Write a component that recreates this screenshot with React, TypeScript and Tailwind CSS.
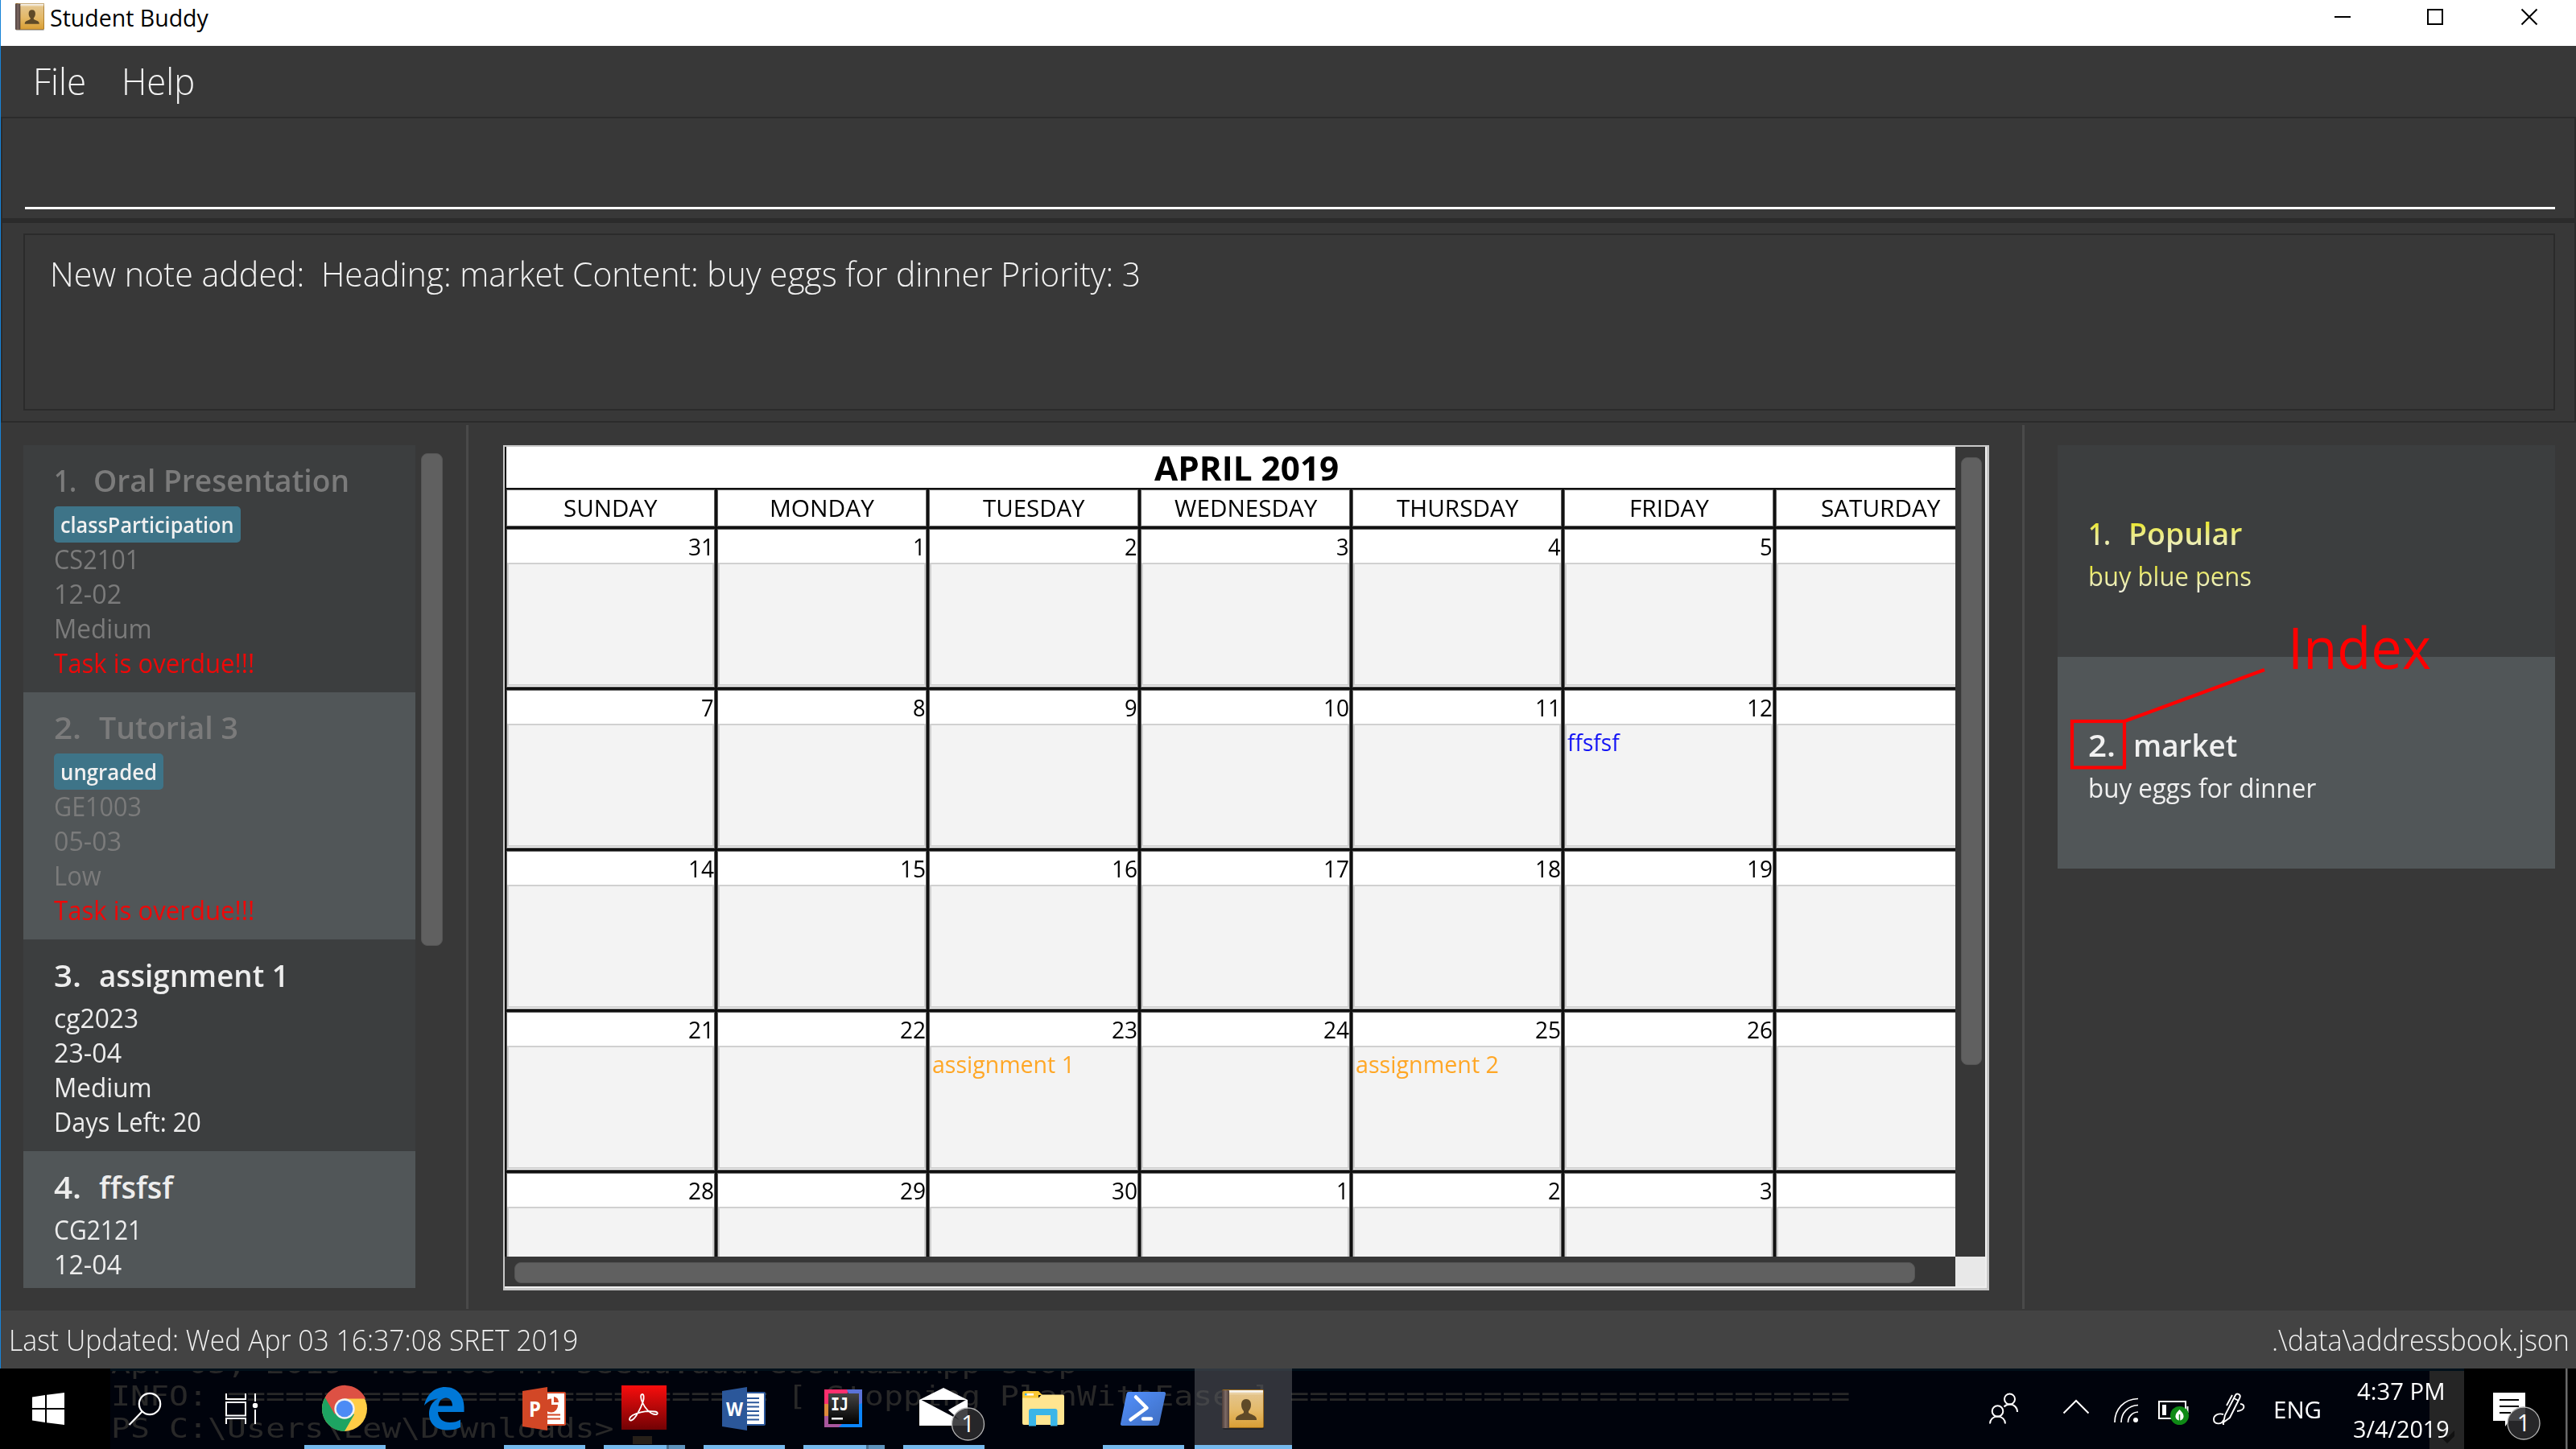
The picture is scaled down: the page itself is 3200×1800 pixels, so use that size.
import React, { useLayoutEffect, useRef, useState } from "react";

/** Single line of text, condensed or widened to occupy exactly `w` pixels. */
function Fit({ w, className = "", children }: { w: number; className?: string; children: string }) {
  const ref = useRef<HTMLSpanElement>(null);
  const [scale, setScale] = useState(1);
  useLayoutEffect(() => {
    if (ref.current) setScale(w / ref.current.offsetWidth);
  }, [w, children]);
  return (
    <span className="block shrink-0" style={{ width: w }}>
      <span
        ref={ref}
        className={`inline-block origin-left whitespace-pre align-top ${className}`}
        style={{ transform: `scaleX(${scale})` }}
      >
        {children}
      </span>
    </span>
  );
}

function BookIcon({ className, id }: { className: string; id: string }) {
  return (
    <svg className={className} viewBox="0 0 52 50" preserveAspectRatio="none">
      <defs>
        <linearGradient id={id} x1="0" y1="0" x2="0" y2="1">
          <stop offset="0" stopColor="#e3c795" />
          <stop offset="0.55" stopColor="#e4b968" />
          <stop offset="1" stopColor="#d99f35" />
        </linearGradient>
        <linearGradient id={`${id}s`} x1="0" y1="0" x2="1" y2="0">
          <stop offset="0" stopColor="#4b3c38" />
          <stop offset="0.5" stopColor="#7d6a65" />
          <stop offset="1" stopColor="#50403a" />
        </linearGradient>
      </defs>
      <rect x="1" y="2" width="51" height="48" rx="2" fill="#000" opacity="0.25" />
      <rect x="0" y="0" width="52" height="48" rx="2" fill="#9a6a1c" />
      <rect x="9" y="1" width="42" height="46" fill={`url(#${id})`} />
      <rect x="5" y="1" width="46" height="3" fill="#f5f1ea" />
      <rect x="9" y="5" width="42" height="1" fill="#f0dcb4" />
      <rect x="0" y="1" width="9" height="47" rx="1" fill={`url(#${id}s)`} />
      <path d="M30 12c-4 0-6 3-6 7s1.500 6 3 8v2c-2 2-10 3-10 8v1h26v-1c0-5-8-6-10-8v-2c1.500-2 3-4 3-8s-2-7-6-7z" fill="#5f4a28" />
    </svg>
  );
}

type Task = { n: string; nw: number; title: string; tw: number; tag?: string; tagW?: number; lines: [string, number][]; done?: boolean };

const tasks: Task[] = [
  { n: "1.", nw: 28, title: "Oral Presentation", tw: 318, tag: "classParticipation", tagW: 216, done: true, lines: [["CS2101", 106], ["12-02", 84], ["Medium", 122], ["Task is overdue!!!", 249]] },
  { n: "2.", nw: 34, title: "Tutorial 3", tw: 173, tag: "ungraded", tagW: 120, done: true, lines: [["GE1003", 109], ["05-03", 84], ["Low", 59], ["Task is overdue!!!", 249]] },
  { n: "3.", nw: 34, title: "assignment 1", tw: 236, lines: [["cg2023", 105], ["23-04", 84], ["Medium", 122], ["Days Left: 20", 183]] },
  { n: "4.", nw: 34, title: "ffsfsf", tw: 92, lines: [["CG2121", 109], ["12-04", 84], ["Low", 59], ["Days Left: 9", 168]] },
];

function TaskCard({ t, odd }: { t: Task; odd: boolean }) {
  return (
    <div className={`shrink-0 pl-[38px] ${t.tag ? "h-[307px] pt-[17px]" : "h-[262.5px] pt-[18px]"} ${odd ? "bg-[#515658]" : "bg-[#3c3e3f]"} ${t.done ? "text-[#7b7b7b]" : "text-[#ededed]"}`}>
      <div className="flex text-[38px] font-semibold leading-[52px]">
        <div className={t.n === "1." ? "w-[49px]" : "w-[56px]"}>
          <Fit w={t.nw}>{t.n}</Fit>
        </div>
        <Fit w={t.tw}>{t.title}</Fit>
      </div>
      {t.tag ? (
        <div className="mb-[-1px] mt-[7px] flex h-[45px] w-fit rounded-[5px] bg-[#3e7488] px-2 text-[27.5px] font-semibold leading-[46px] text-[#f0f0f0]">
          <Fit w={t.tagW!}>{t.tag}</Fit>
        </div>
      ) : (
        <div className="h-[6px]" />
      )}
      {t.lines.map(([s, w], i) => (
        <div key={i} className={`text-[33px] leading-[43px] ${s.startsWith("Task") ? "text-[#ee0808]" : ""}`}>
          <Fit w={w}>{s}</Fit>
        </div>
      ))}
    </div>
  );
}

const weekdays: [string, number][] = [["SUNDAY", 117], ["MONDAY", 130], ["TUESDAY", 127], ["WEDNESDAY", 177], ["THURSDAY", 151], ["FRIDAY", 99], ["SATURDAY", 148]];
const weeks = [
  [31, 1, 2, 3, 4, 5, 6],
  [7, 8, 9, 10, 11, 12, 13],
  [14, 15, 16, 17, 18, 19, 20],
  [21, 22, 23, 24, 25, 26, 27],
  [28, 29, 30, 1, 2, 3, 4],
];
const events: Record<string, { text: string; w: number; color: string }> = {
  "1-5": { text: "ffsfsf", w: 65, color: "text-[#1414f5]" },
  "3-2": { text: "assignment 1", w: 177, color: "text-[#ffa726]" },
  "3-4": { text: "assignment 2", w: 178, color: "text-[#ffa726]" },
};

function Calendar() {
  return (
    <div className="grid h-[1050px] w-[1846px] grid-cols-[1802px_37px] grid-rows-[1006px_37px] border-b-[3px] border-l-2 border-r-[3px] border-t-2 border-[#c8c8c8] bg-[#efefef]">
      <div className="overflow-hidden border-l-2 border-[#111] bg-white text-black">
        <div className="w-[1838px]">
          <div className="flex h-[53px] justify-center border-b-2 border-[#111] text-[41px] font-bold leading-[52px]">
            <Fit w={229}>APRIL 2019</Fit>
          </div>
          <div className="grid grid-cols-[262px_repeat(6,263px)]">
            {weekdays.map(([d, w]) => (
              <div key={d} className="h-[49px] border-b-[3px] border-r-[3px] border-[#111] text-[28.5px]">
                <div className="flex h-[46px] justify-center border border-[#606060] leading-[45px]">
                  <Fit w={w}>{d}</Fit>
                </div>
              </div>
            ))}
          </div>
          {weeks.map((week, r) => (
            <div key={r} className="grid grid-cols-[262px_repeat(6,263px)]">
              {week.map((n, c) => {
                const ev = events[`${r}-${c}`];
                return (
                  <div key={c} className="h-[200px] border-b-[3px] border-r-[3px] border-[#111]">
                    <div className="h-[197px] border border-[#606060] pb-px">
                      <div className="flex h-[41px] justify-end text-[29px] leading-[42px]">
                        <Fit w={n > 9 ? 32 : 16}>{String(n)}</Fit>
                      </div>
                      <div className="h-[153px] border-2 border-[#d0d0d0] bg-[#f3f3f3] pt-px">
                        {ev && (
                          <div className={`pl-px text-[29px] leading-[40px] ${ev.color}`}>
                            <Fit w={ev.w}>{ev.text}</Fit>
                          </div>
                        )}
                      </div>
                    </div>
                  </div>
                );
              })}
            </div>
          ))}
        </div>
      </div>
      <div className="bg-[#373737] pl-[7px] pt-[13px]">
        <div className="h-[755px] w-[26px] rounded-lg border border-[#555] bg-[#606060]" />
      </div>
      <div className="bg-[#373737] pl-[12px] pt-[7px]">
        <div className="h-[26px] w-[1740px] rounded-lg border border-[#555] bg-[#606060]" />
      </div>
      <div className="bg-[#e8e8e8]" />
    </div>
  );
}

function AppSlot({ x, bar, children }: { x: number; bar?: "one" | "many" | "active"; children: React.ReactNode }) {
  const active = bar === "active";
  return (
    <div className={`flex h-full flex-col ${active ? "w-[121px] bg-[#5a5b60]/55" : "w-[124px]"}`}>
      <svg className={`h-[95px] shrink-0 ${active ? "w-[121px]" : "w-[124px]"}`} viewBox={`${x} 1700 ${active ? 121 : 124} 95`}>{children}</svg>
      {bar === "one" && <div className="ml-[10px] h-[5px] w-[101px] bg-[#76b9ed]" />}
      {bar === "active" && <div className="h-[5px] w-[121px] bg-[#76b9ed]" />}
      {bar === "many" && (
        <div className="ml-[10px] flex h-[5px] w-[101px]">
          <div className="w-[78px] bg-[#76b9ed]" />
          <div className="w-[3px] bg-[#456f90]" />
          <div className="w-[20px] bg-[#5e93bd]" />
        </div>
      )}
    </div>
  );
}

function Taskbar() {
  return (
    <div className="relative h-[100px] overflow-hidden bg-[#00030c] text-white">
      <div className="absolute left-[138px] top-[-25.5px] font-['DejaVu_Sans_Mono'] text-[33.5px] leading-[40px] text-[#282828]">
        <Fit w={1200}>Apr 03, 2019 4:32:08 PM seedu.address.MainApp stop</Fit>
        <Fit w={2160}>{"INFO: " + "=".repeat(28) + " [ Stopping PlanWithEase ] " + "=".repeat(29)}</Fit>
        <Fit w={624}>{"PS C:\\Users\\Lew\\Downloads>"}</Fit>
      </div>
      <div className="absolute left-0 top-0 h-[3px] w-full bg-[#00101a]" />
      <div className="absolute left-[786px] top-[84px] h-[10px] w-6 bg-[#262019]" />
      <div className="relative flex h-full">
        <svg className="h-[100px] w-[137px] bg-black" viewBox="0 1700 137 100">
          <path fill="#fff" d="M40 1735.500L56 1733v16H40zM58 1732.700L80 1730v19H58zM40 1751H56v16L40 1764.500zM58 1751H80v19L58 1767.300z" />
        </svg>
        <svg className="h-[100px] w-[90px]" viewBox="137 1700 90 100" fill="none" stroke="#fff" strokeWidth="2.200">
          <circle cx="186" cy="1744" r="13.200" />
          <path d="M176.500 1753.500L160.500 1770" />
        </svg>
        <svg className="h-[100px] w-[141px]" viewBox="227 1700 141 100" fill="none" stroke="#fff" strokeWidth="2">
          <path d="M281 1731v7h24v-7M281 1742h24v16.500h-24zM281 1769v-7h24v7M317 1731v10M317 1751v18" />
          <circle cx="317" cy="1746" r="3.200" fill="#fff" stroke="none" />
        </svg>
        <AppSlot x={368} bar="one">
          <circle cx="428" cy="1750" r="28" fill="#ffcd46" />
          <path d="M428 1750L403.750 1736A28 28 0 0 0 428 1778L440.100 1757z" fill="#1da462" />
          <path d="M403.750 1736A28 28 0 0 1 454.200 1737.500H428L415.900 1757z" fill="#dd5144" />
          <circle cx="428" cy="1750" r="12.700" fill="#f1f1f1" />
          <circle cx="428" cy="1750" r="10.300" fill="#4c8bf5" />
        </AppSlot>
        <AppSlot x={492}>
          <path fill="#0078d7" d="M527 1746C530 1732 540 1723 553 1723C568 1723 576.500 1734 576.500 1748V1754H544C544.500 1763 551 1767 559 1767C564 1767 568.500 1766 572 1763.500V1773C567.500 1775.500 562 1776.500 556 1776.500C541 1776.500 533 1768 533 1756C533 1748 537 1741 544 1737.500C537 1738 531 1741 527 1746zM544.500 1746.500H562C562 1740.500 559 1736.500 554 1736.500C549 1736.500 545.500 1740 544.500 1746.500z" />
        </AppSlot>
        <AppSlot x={616} bar="one">
          <rect x="678" y="1729" width="25" height="42" rx="2" fill="#d24726" />
          <rect x="680" y="1731" width="21" height="38" fill="#fff" />
          <path d="M685 1737.500A8.500 8.500 0 1 0 693 1745H685z" fill="#d24726" />
          <path d="M688 1735v7h6a7 7 0 0 0-6-7z" fill="#d24726" />
          <path d="M680 1757.500h16M680 1762.500h16" stroke="#d24726" strokeWidth="2" />
          <path d="M649 1728L680 1723V1777L649 1772z" fill="#d24726" />
          <text x="657" y="1760" fontSize="27" fontWeight="700" fill="#fff" textLength="15" lengthAdjust="spacingAndGlyphs">P</text>
        </AppSlot>
        <AppSlot x={740} bar="many">
          <defs>
            <linearGradient id="acro" x1="0" y1="0" x2="0" y2="1">
              <stop offset="0" stopColor="#f90d0d" />
              <stop offset="1" stopColor="#720204" />
            </linearGradient>
          </defs>
          <rect x="772" y="1721" width="56" height="55" fill="url(#acro)" />
          <path d="M798 1732c-3 0-2 6 0 10c3 7 9 14 15 15c5 1 5-3 0-3.500c-9-1-20 1-27 4.500c-5 3-5 7-2 6.500c5-1 12-15 15-24c1-4 1-8.500-1-8.500z" fill="none" stroke="#fff" strokeWidth="1.800" />
        </AppSlot>
        <AppSlot x={864} bar="one">
          <rect x="926" y="1729" width="25" height="42" rx="2" fill="#2b579a" />
          <rect x="928" y="1731" width="21" height="38" fill="#fff" />
          <path d="M928 1737h15M928 1742.300h15M928 1747.600h15M928 1752.900h15M928 1758.200h15M928 1763.500h15" stroke="#2b579a" strokeWidth="2" />
          <path d="M897 1728L928 1723V1777L897 1772z" fill="#2b579a" />
          <text x="902" y="1759" fontSize="24" fontWeight="700" fill="#fff" textLength="21" lengthAdjust="spacingAndGlyphs">W</text>
        </AppSlot>
        <AppSlot x={988} bar="many">
          <defs>
            <linearGradient id="ijb" x1="0" y1="0" x2="0" y2="1">
              <stop offset="0" stopColor="#444" />
              <stop offset="1" stopColor="#000" />
            </linearGradient>
          </defs>
          <path d="M1024 1726h30l-6 24h-24z" fill="#fe2f6e" />
          <path d="M1052 1726h19v20h-12z" fill="#5a72d8" />
          <path d="M1071 1743v30h-32l6-20z" fill="#0b85fb" />
          <path d="M1024 1744h10v16h-10z" fill="#dd8a3a" />
          <path d="M1024 1759h10l12 10-4 4h-18z" fill="#a8569c" />
          <rect x="1029" y="1731" width="38" height="38" fill="url(#ijb)" />
          <text x="1032" y="1752" fontSize="21" fontWeight="700" fill="#fff" fontFamily="DejaVu Sans Mono" textLength="22" lengthAdjust="spacingAndGlyphs">IJ</text>
          <rect x="1033" y="1761" width="14" height="2.500" fill="#fff" />
        </AppSlot>
        <AppSlot x={1112} bar="one">
          <path d="M1142 1739L1172 1724L1202 1739V1771H1142zM1144.500 1739L1192 1764L1178 1751.500L1200 1739z" fill="#fff" fillRule="evenodd" />
          <circle cx="1202.500" cy="1769" r="20" fill="#2b2b2e" fillOpacity="0.88" stroke="#b5b5b5" strokeWidth="1.300" />
          <text x="1202.500" y="1779" fontSize="29" textAnchor="middle" fill="#fff">1</text>
        </AppSlot>
        <AppSlot x={1236}>
          <path d="M1270 1730a2 2 0 0 1 2-2h18l5 5h-5v4h-20z" fill="#fcc934" />
          <path d="M1270 1736.500h20l4-4h26a2 2 0 0 1 2 2V1768a2 2 0 0 1-2 2h-48a2 2 0 0 1-2-2z" fill="#ffe590" />
          <rect x="1273" y="1731" width="11" height="2.500" fill="#fff" />
          <rect x="1273" y="1731" width="2.500" height="2.500" fill="#3ab5e8" />
          <path d="M1278 1771.500v-18.500a3 3 0 0 1 3-3h29.500a3 3 0 0 1 3 3v18.500h-8.500V1758h-18v13.500z" fill="#3ab5e8" />
        </AppSlot>
        <AppSlot x={1360} bar="one">
          <defs>
            <linearGradient id="psh" x1="0" y1="0" x2="1" y2="1">
              <stop offset="0" stopColor="#5391fe" />
              <stop offset="1" stopColor="#3e6dbf" />
            </linearGradient>
          </defs>
          <path d="M1402 1729H1446a2 2 0 0 1 2 2.500L1440 1769a3 3 0 0 1-2.500 2H1394a2 2 0 0 1-2-2.500L1399.500 1731a3 3 0 0 1 2.500-2z" fill="url(#psh)" />
          <path d="M1411 1735.500L1424.500 1749L1404.500 1763.500" fill="none" stroke="#fff" strokeWidth="4.500" strokeLinecap="round" strokeLinejoin="round" />
          <path d="M1420 1762.500h10" stroke="#fff" strokeWidth="4.500" strokeLinecap="round" />
        </AppSlot>
        <AppSlot x={1484} bar="active">
          <svg x="1518" y="1726" width="52" height="50" viewBox="0 0 52 50">
            <BookIcon id="bk2" className="h-[50px] w-[52px]" />
          </svg>
        </AppSlot>
        <svg className="ml-auto h-[100px] w-[360px]" viewBox="2450 1700 360 100" fill="none" stroke="#fff" strokeWidth="2">
          <circle cx="2496.500" cy="1738" r="6.500" />
          <circle cx="2481.500" cy="1753" r="6.800" />
          <path d="M2472 1768.500c0-5 4-9 9.500-9s9.500 4 9.500 9M2489.500 1747.500c2-2 4.500-3 7-3c5.500 0 9.500 4 9.500 9.500" />
          <path d="M2563.500 1755.500L2579 1740L2594.500 1755.500" />
          <path d="M2627 1767c0-16 11-29 29-29.500M2635 1767c0-12 9-21 21-21.500M2643.500 1767c0-7 5-12.500 12.500-13" strokeWidth="1.700" />
          <circle cx="2653" cy="1764" r="3" fill="#fff" stroke="none" />
          <path d="M2682 1741h33v21h-33zM2717.500 1747v8" />
          <rect x="2686" y="1745" width="5" height="13" fill="#fff" stroke="none" />
          <circle cx="2707.500" cy="1758.500" r="11.500" fill="#0f8a16" stroke="none" />
          <path d="M2707.500 1751c-4 4-5 6-5 8.500s2 5 5 5s5-2.500 5-5s-1-4.500-5-8.500z" fill="#fff" stroke="none" />
          <path d="M2707.500 1757v12" stroke="#0f8a16" strokeWidth="1.500" />
          <path d="M2762 1767l2-9l13-25c1.500-3 7-1 5.500 3l-12.500 25zM2773 1733l-7 13M2775 1737l6 3M2762 1757c-6-2-12 1-12 6c0 7 10 7 12 1v6M2783 1744c6 0 7 8-4 9" strokeWidth="1.900" />
        </svg>
        <div className="flex w-[88px] pl-[14px] text-[28.500px] leading-[102px]">
          <Fit w={60}>ENG</Fit>
        </div>
        <div className="relative w-[163px] pl-[25px] pt-[5px] text-[28.500px] leading-[47px]">
          <div className="absolute left-[120px] top-[3px] h-[97px] w-[43px] bg-[#252525]" />
          <svg className="absolute left-[133px] top-[76px] h-[18px] w-[18px]" viewBox="0 0 18 18">
            <path d="M0 1l9 9l9-9v7l-9 9l-9-9z" fill="#111" />
          </svg>
          <div className="relative flex flex-col">
            <div className="pl-[5px]"><Fit w={110}>4:37 PM</Fit></div>
            <Fit w={120}>3/4/2019</Fit>
          </div>
        </div>
        <svg className="h-[100px] w-[139px] bg-black" viewBox="3061 1700 139 100">
          <path d="M3097 1730h40v35h-20l-5 7v-7h-15z" fill="#fff" />
          <path d="M3105 1739h24M3105 1747h24M3105 1755h14" stroke="#000" strokeWidth="2" />
          <circle cx="3135" cy="1768" r="20" fill="#2b2b2e" fillOpacity="0.88" stroke="#b5b5b5" strokeWidth="1.300" />
          <text x="3135" y="1778" fontSize="29" textAnchor="middle" fill="#fff">1</text>
          <rect x="3187" y="1700" width="2.500" height="100" fill="#6a6a6a" />
        </svg>
      </div>
    </div>
  );
}

export default function App() {
  return (
    <div className="flex h-[1800px] w-[3200px] flex-col overflow-hidden bg-[#383838] font-['Open_Sans',sans-serif]">
      <div className="flex h-[1700px] flex-col border-l border-[#1883d7]">
        <div className="flex h-[57px] shrink-0 bg-white text-black">
          <BookIcon id="bk1" className="ml-[18px] mt-[4px] h-[34px] w-[36px]" />
          <div className="ml-[7px] text-[28.500px] leading-[45px]">
            <Fit w={197}>Student Buddy</Fit>
          </div>
          <svg className="ml-auto h-[42px] w-[320px]" viewBox="2880 0 320 42" fill="none" stroke="#000" strokeWidth="2">
            <path d="M2900 21h20M3016 12h18v18h-18zM3132.500 11.500l19 19M3151.500 11.500l-19 19" />
          </svg>
        </div>

        <div className="flex h-[88px] shrink-0 pl-[40px] text-[46px] font-light leading-[86px] text-[#f2f2f2]">
          <div className="w-[110px]"><Fit w={66}>File</Fit></div>
          <Fit w={91}>Help</Fit>
        </div>

        <div className="h-[129px] shrink-0 border-2 border-b-[3px] border-[#2b2b2b] pl-[28px] pr-[24px]">
          <div className="h-[113px] border-b-[3px] border-white" />
        </div>
        <div className="h-[251px] shrink-0 border-2 border-t-[3px] border-[#2b2b2b] px-[26px] pr-[24px] pt-[13px]">
          <div className="flex h-[220px] border-2 border-[#2b2b2b] pl-[31px] pt-[20px] text-[42px] font-light leading-[56px] text-[#f2f2f2]">
            <div className="w-[337px]">
              <Fit w={316}>New note added:</Fit>
            </div>
            <Fit w={1018}>Heading: market Content: buy eggs for dinner Priority: 3</Fit>
          </div>
        </div>

        <div className="flex h-[1103px] shrink-0 pb-[2px] pt-[3px]">
          <div className="flex w-[578px] shrink-0 pl-[28px] pt-[25px]">
            <div className="flex h-[1047px] w-[487px] flex-col overflow-hidden">
              {tasks.map((t, i) => (
                <TaskCard key={t.n} t={t} odd={i % 2 === 1} />
              ))}
            </div>
            <div className="ml-[7px] mt-[10px] h-[612px] w-[27px] rounded-lg border border-[#555] bg-[#606060]" />
          </div>
          <div className="w-[3px] shrink-0 bg-[#4a4a4a]" />
          <div className="w-[1930px] shrink-0 pl-[43px] pt-[25px]">
            <Calendar />
          </div>
          <div className="w-[3px] shrink-0 bg-[#4a4a4a]" />
          <div className="pl-[41px] pt-[25px]">
            <div className="relative w-[618px]">
              <div className="h-[263px] bg-[#3c3e3f] pl-[38px] pt-[83px]">
                <div className="flex text-[38px] font-semibold leading-[52px]">
                  <div className="w-[50px]">
                    <Fit w={28} className="bg-gradient-to-b from-[#ebe838] from-30% to-[#efefd0] to-90% bg-clip-text text-transparent">1.</Fit>
                  </div>
                  <Fit w={141} className="bg-gradient-to-b from-[#ebe838] from-30% to-[#efefd0] to-90% bg-clip-text text-transparent">Popular</Fit>
                </div>
                <div className="mt-[6px] text-[33px] leading-[43px]">
                  <Fit w={203} className="bg-gradient-to-b from-[#ebe838] from-25% to-[#f0f0e4] bg-clip-text text-transparent">buy blue pens</Fit>
                </div>
              </div>
              <div className="h-[263px] bg-[#515658] pl-[38px] pt-[83px] text-[#f0f0f0]">
                <div className="flex text-[38px] font-semibold leading-[52px]">
                  <div className="w-[56px]"><Fit w={34}>2.</Fit></div>
                  <Fit w={129}>market</Fit>
                </div>
                <div className="mt-[6px] text-[33px] leading-[43px]">
                  <Fit w={283}>buy eggs for dinner</Fit>
                </div>
              </div>
              <svg className="absolute left-0 top-0 h-[526px] w-[618px]" viewBox="2556 553 618 526" fill="none" stroke="#ff0000" strokeWidth="4.200">
                <rect x="2574" y="896" width="65" height="57.500" />
                <path d="M2639 896L2813 832" />
              </svg>
              <div className="absolute left-[286px] top-[203px] text-[71px] font-medium leading-[96px] text-[#ff0000]">
                <Fit w={178}>Index</Fit>
              </div>
            </div>
          </div>
        </div>

        <div className="flex h-[72px] shrink-0 justify-between bg-[#434343] pl-[10px] pr-[8px] text-[36px] font-light leading-[74px] text-[#f0f0f0]">
          <Fit w={707}>Last Updated: Wed Apr 03 16:37:08 SRET 2019</Fit>
          <Fit w={370}>{".\\data\\addressbook.json"}</Fit>
        </div>
      </div>
      <Taskbar />
    </div>
  );
}
